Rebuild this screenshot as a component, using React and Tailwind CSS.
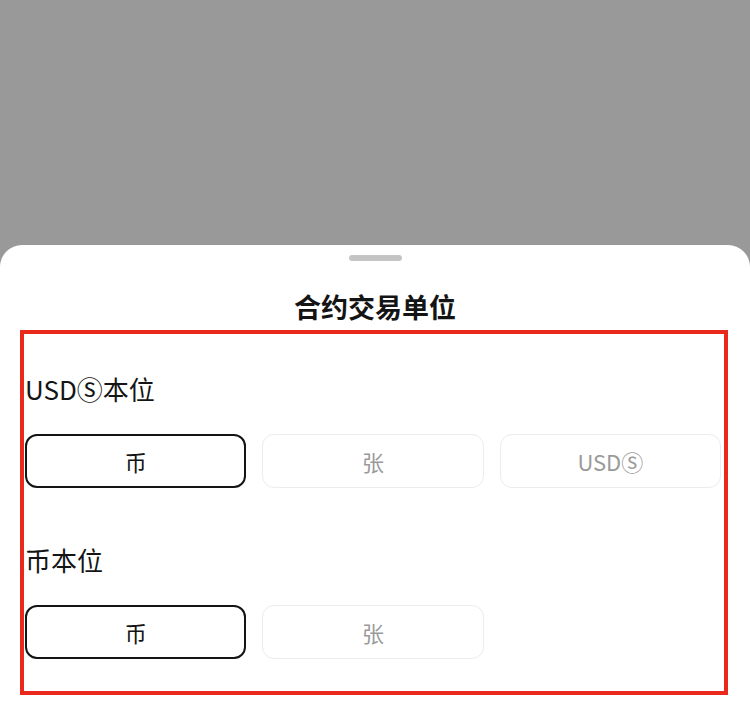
import React, { useState } from "react";

const font = { fontFamily: '"Noto Sans CJK SC", "Noto Sans", sans-serif' };

const groups = [
  { title: "USDⓈ本位", options: ["币", "张", "USDⓈ"] },
  { title: "币本位", options: ["币", "张"] },
];

const Option = ({ label, active, onClick }) => (
  <button
    onClick={onClick}
    className={
      "h-[54px] rounded-[12px] flex items-center justify-center text-[22px] " +
      (active
        ? "border-2 border-[#141414] text-[#141414]"
        : "border border-[#ececec] text-[#9a9a9a]")
    }
  >
    {label}
  </button>
);

const Group = ({ title, options, className }) => {
  const [selected, setSelected] = useState(0);

  return (
    <div className={className}>
      <div className="text-[26px] leading-[34px] text-[#141414]">{title}</div>
      <div className="grid grid-cols-3 gap-[16px] mt-[28px]">
        {options.map((o, i) => (
          <Option key={o} label={o} active={selected === i} onClick={() => setSelected(i)} />
        ))}
      </div>
    </div>
  );
};

const App = () => {
  return (
    <div className="w-[750px] h-[706px] bg-[#999999] flex flex-col overflow-hidden" style={font}>
      <div className="h-[245px] shrink-0" />
      <div className="flex-1 bg-white rounded-t-[22px] flex flex-col items-center">
        <div className="mt-[10px] w-[53px] h-[6px] rounded-full bg-[#c4c4c4]" />
        <div className="mt-[28px] text-[27px] leading-[36px] font-bold text-[#141414]">合约交易单位</div>
        <div className="self-start ml-[20px] mt-[5px] w-[708px] border-4 border-[#e8291c] pl-[1px] pr-[3px] pt-[38px] pb-[32px]">
          <Group title={groups[0].title} options={groups[0].options} />
          <Group title={groups[1].title} options={groups[1].options} className="mt-[55px]" />
        </div>
      </div>
    </div>
  );
};

export default App;
